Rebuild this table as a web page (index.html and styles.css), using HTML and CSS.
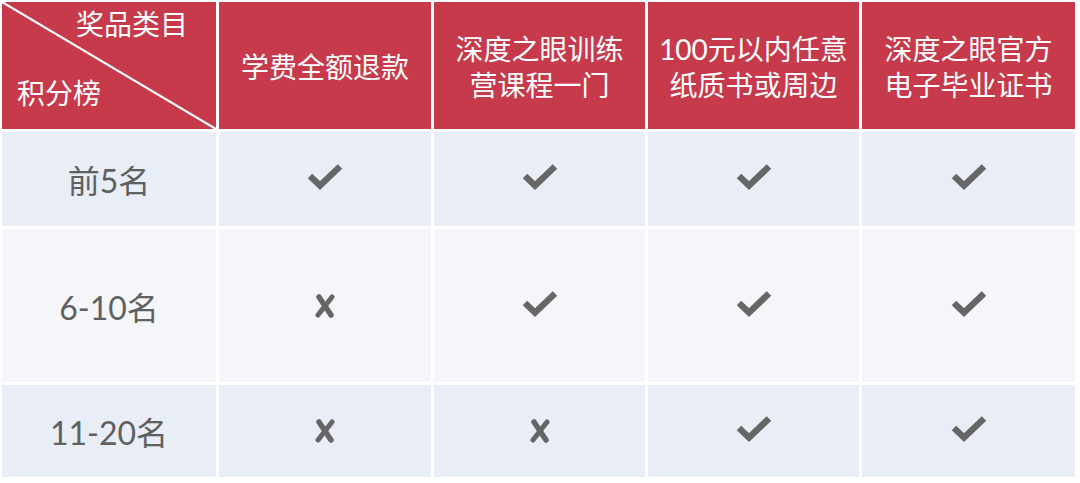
FILE: index.html
```html
<!DOCTYPE html>
<html lang="zh">
<head>
<meta charset="utf-8">
<link rel="stylesheet" href="styles.css">
</head>
<body>
<div class="board">
  <div class="cell head corner">
    <svg class="diag" viewBox="0 0 214 127" preserveAspectRatio="none"><line x1="0" y1="0" x2="214" y2="127" stroke="#fff" stroke-width="2.2"/></svg>
    <span class="c-top">奖品类目</span>
    <span class="c-bot">积分榜</span>
  </div>
  <div class="cell head">学费全额退款</div>
  <div class="cell head">深度之眼训练<br>营课程一门</div>
  <div class="cell head">100元以内任意<br>纸质书或周边</div>
  <div class="cell head">深度之眼官方<br>电子毕业证书</div>

  <div class="cell odd label">前5名</div>
  <div class="cell odd"><svg class="ok" viewBox="0 0 36 26"><polyline points="3,12 13,21.5 33,2.5" fill="none" stroke="#666" stroke-width="6.5"/></svg></div>
  <div class="cell odd"><svg class="ok" viewBox="0 0 36 26"><polyline points="3,12 13,21.5 33,2.5" fill="none" stroke="#666" stroke-width="6.5"/></svg></div>
  <div class="cell odd"><svg class="ok" viewBox="0 0 36 26"><polyline points="3,12 13,21.5 33,2.5" fill="none" stroke="#666" stroke-width="6.5"/></svg></div>
  <div class="cell odd"><svg class="ok" viewBox="0 0 36 26"><polyline points="3,12 13,21.5 33,2.5" fill="none" stroke="#666" stroke-width="6.5"/></svg></div>

  <div class="cell even label">6-10名</div>
  <div class="cell even"><svg class="no" viewBox="0 0 20 24"><path d="M4 3 L16 21" stroke="#666" stroke-width="5.5" stroke-linecap="round"/><path d="M17 3 L3 21" stroke="#666" stroke-width="5" stroke-linecap="round"/></svg></div>
  <div class="cell even"><svg class="ok" viewBox="0 0 36 26"><polyline points="3,12 13,21.5 33,2.5" fill="none" stroke="#666" stroke-width="6.5"/></svg></div>
  <div class="cell even"><svg class="ok" viewBox="0 0 36 26"><polyline points="3,12 13,21.5 33,2.5" fill="none" stroke="#666" stroke-width="6.5"/></svg></div>
  <div class="cell even"><svg class="ok" viewBox="0 0 36 26"><polyline points="3,12 13,21.5 33,2.5" fill="none" stroke="#666" stroke-width="6.5"/></svg></div>

  <div class="cell odd label">11-20名</div>
  <div class="cell odd"><svg class="no" viewBox="0 0 20 24"><path d="M4 3 L16 21" stroke="#666" stroke-width="5.5" stroke-linecap="round"/><path d="M17 3 L3 21" stroke="#666" stroke-width="5" stroke-linecap="round"/></svg></div>
  <div class="cell odd"><svg class="no" viewBox="0 0 20 24"><path d="M4 3 L16 21" stroke="#666" stroke-width="5.5" stroke-linecap="round"/><path d="M17 3 L3 21" stroke="#666" stroke-width="5" stroke-linecap="round"/></svg></div>
  <div class="cell odd"><svg class="ok" viewBox="0 0 36 26"><polyline points="3,12 13,21.5 33,2.5" fill="none" stroke="#666" stroke-width="6.5"/></svg></div>
  <div class="cell odd"><svg class="ok" viewBox="0 0 36 26"><polyline points="3,12 13,21.5 33,2.5" fill="none" stroke="#666" stroke-width="6.5"/></svg></div>
</div>
</body>
</html>
```

FILE: styles.css
```css
html, body {
  margin: 0;
  padding: 0;
  background: #ffffff;
}
body {
  width: 1080px;
  height: 483px;
  overflow: hidden;
  font-family: Lato, "Noto Sans CJK SC", sans-serif;
}
.board {
  display: grid;
  grid-template-columns: 214px 212px 211px 211px 213px;
  grid-template-rows: 127px 94px 153px 92px;
  gap: 3px 3px;
  padding: 2px 0 0 2px;
  width: fit-content;
}
.cell {
  display: flex;
  align-items: center;
  justify-content: center;
  text-align: center;
}
.head {
  background: #c63a4b;
  color: #ffffff;
  font-size: 28px;
  line-height: 36px;
  padding-top: 2px;
  box-sizing: border-box;
}
.corner {
  position: relative;
  display: block;
}
.diag {
  position: absolute;
  left: 0;
  top: 0;
  width: 100%;
  height: 100%;
}
.c-top {
  position: absolute;
  left: 74px;
  top: 4px;
}
.c-bot {
  position: absolute;
  left: 15px;
  top: 73px;
}
.odd {
  background: #e9edf5;
}
.even {
  background: #f4f6fa;
}
.label {
  color: #606060;
  font-size: 32px;
}
.ok {
  width: 36px;
  height: 26px;
  margin-top: -4px;
}
.no {
  width: 20px;
  height: 24px;
}
```
